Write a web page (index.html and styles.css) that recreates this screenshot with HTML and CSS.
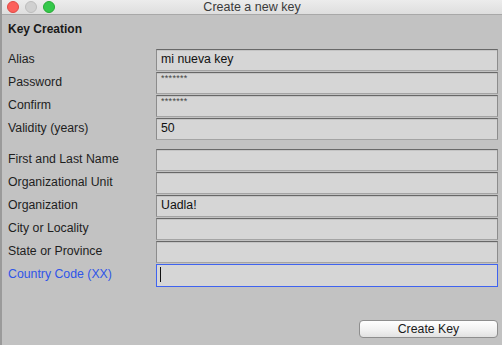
FILE: index.html
```html
<!DOCTYPE html>
<html>
<head>
<meta charset="utf-8">
<link rel="stylesheet" href="styles.css">
</head>
<body>
<div class="window">
  <div class="titlebar">
    <div class="lights">
      <span class="light red"></span>
      <span class="light gray"></span>
      <span class="light green"></span>
    </div>
    <div class="title">Create a new key</div>
  </div>
  <div class="content">
    <div class="heading">Key Creation</div>
    <div class="group">
      <div class="row"><span class="label">Alias</span><div class="field">mi nueva key</div></div>
      <div class="row"><span class="label">Password</span><div class="field pw">*******</div></div>
      <div class="row"><span class="label">Confirm</span><div class="field pw">*******</div></div>
      <div class="row"><span class="label">Validity (years)</span><div class="field">50</div></div>
    </div>
    <div class="group second">
      <div class="row"><span class="label">First and Last Name</span><div class="field"></div></div>
      <div class="row"><span class="label">Organizational Unit</span><div class="field"></div></div>
      <div class="row"><span class="label">Organization</span><div class="field">Uadla!</div></div>
      <div class="row"><span class="label">City or Locality</span><div class="field"></div></div>
      <div class="row"><span class="label">State or Province</span><div class="field"></div></div>
      <div class="row"><span class="label focus">Country Code (XX)</span><div class="field active"><span class="caret"></span></div></div>
    </div>
    <div class="actions">
      <button class="btn">Create Key</button>
    </div>
  </div>
</div>
</body>
</html>
```
FILE: styles.css
```css
html, body {
  margin: 0;
  padding: 0;
}
body {
  width: 502px;
  height: 345px;
  overflow: hidden;
  background: #c2c2c2;
  font-family: "Liberation Sans", Arial, sans-serif;
  font-size: 12px;
  color: #1a1a1a;
}
.window {
  height: 345px;
  display: flex;
  flex-direction: column;
  border-left: 2px solid #9a9a9a;
  box-sizing: border-box;
}
.titlebar {
  height: 14px;
  background: linear-gradient(#ececec, #dedede);
  border-bottom: 1px solid #a8a8a8;
  display: flex;
  align-items: center;
  position: relative;
}
.lights {
  display: flex;
  gap: 6px;
  padding-left: 5px;
}
.light {
  width: 12px;
  height: 12px;
  border-radius: 50%;
  box-sizing: border-box;
}
.red { background: #fc605b; border: 1px solid #de4a45; }
.gray { background: #d0d0d0; border: 1px solid #bdbdbd; }
.green { background: #34c84a; border: 1px solid #27aa35; }
.title {
  position: absolute;
  left: 0;
  right: 0;
  top: 0;
  text-align: center;
  font-size: 12.5px;
  line-height: 15px;
  color: #3a3a3a;
}
.content {
  flex: 1;
  padding: 0 4px 0 6px;
  display: flex;
  flex-direction: column;
}
.heading {
  font-weight: bold;
  height: 34px;
  line-height: 29px;
}
.group {
  display: flex;
  flex-direction: column;
  gap: 1px;
}
.group.second {
  margin-top: 9px;
}
.row {
  display: flex;
  align-items: center;
  height: 22px;
}
.label {
  width: 148px;
  flex: none;
  font-size: 12.3px;
  color: #1e1e1e;
  margin-top: -2px;
}
.label.focus {
  color: #2f55e8;
}
.field {
  flex: 1;
  height: 22px;
  box-sizing: border-box;
  background: #d6d6d6;
  border: 1px solid #8c8c8c;
  border-top-color: #686868;
  border-bottom-color: #a4a4a4;
  box-shadow: inset 0 1px 0 #c4c4c4;
  padding: 0 4px;
  line-height: 19px;
  font-size: 12.3px;
  color: #111;
}
.field.pw {
  font-size: 9px;
  line-height: 11px;
  color: #444;
  letter-spacing: 0.3px;
}
.field.active {
  height: 23px;
  border: 1px solid #3f63f0;
  box-shadow: none;
  padding: 2px 3px;
}
.caret {
  display: block;
  width: 1px;
  height: 15px;
  background: #111;
}
.actions {
  display: flex;
  justify-content: flex-end;
  margin-top: 34px;
}
.btn {
  width: 139px;
  height: 18px;
  border: 1px solid #8e8e8e;
  border-radius: 4px;
  background: linear-gradient(#ffffff, #f0f0f0 60%, #e2e2e2);
  font-family: "Liberation Sans", Arial, sans-serif;
  font-size: 12.3px;
  color: #1a1a1a;
  padding: 0;
  line-height: 16px;
}
```
